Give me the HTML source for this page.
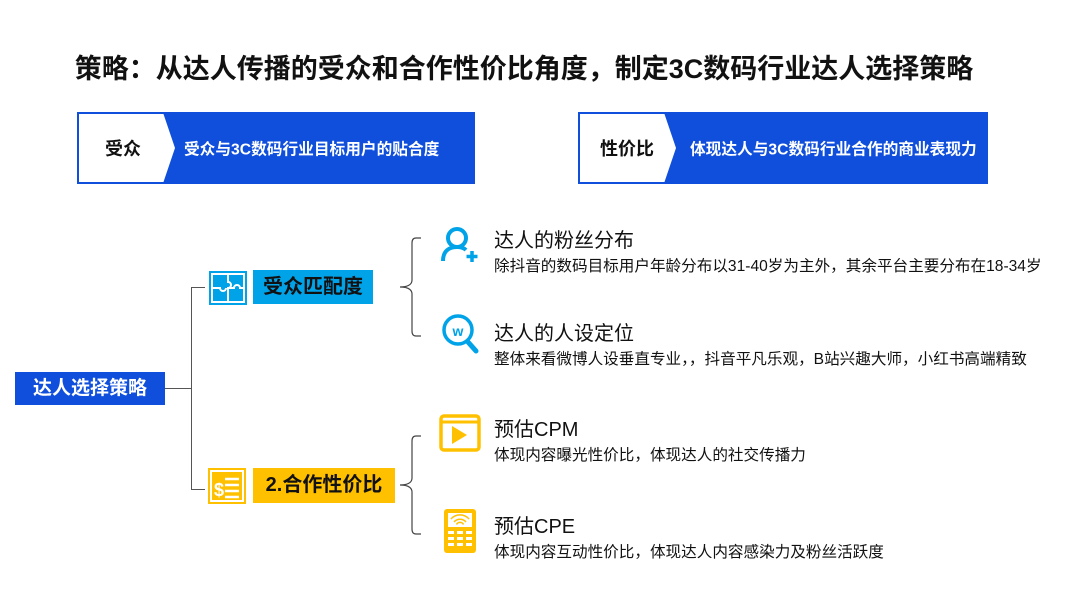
<!DOCTYPE html>
<html><head><meta charset="utf-8"><style>
*{margin:0;padding:0;box-sizing:border-box}
body{width:1080px;height:598px;background:#fff;position:relative;overflow:hidden;font-family:"Liberation Sans","Noto Sans CJK SC",sans-serif;color:#111}
.a{position:absolute;white-space:nowrap}
.title{left:0;width:1048px;text-align:center;top:47px;font-size:27px;font-weight:bold}
.hb{position:absolute;top:112px;height:72px;background:#0f4fdc;border:2px solid #0f4fdc}
.hb .w{position:absolute;left:0;top:0;bottom:0;background:#fff;clip-path:polygon(0 0,88% 0,100% 50%,88% 100%,0 100%)}
.hb .w span{position:absolute;top:50%;transform:translateY(-50%);font-size:18px;font-weight:bold;color:#111}
.hb .t{position:absolute;top:50%;transform:translateY(-50%);color:#fff;font-size:15.7px;font-weight:bold}
.h{font-size:20px;color:#111}
.s{font-size:15.6px;color:#111}
.ln{position:absolute;background:#555}
</style></head><body>
<div class="a title">策略：从达人传播的受众和合作性价比角度，制定3C数码行业达人选择策略</div>

<div class="hb" style="left:77px;width:398px"><div class="w" style="width:96px"><span style="left:26px">受众</span></div><div class="t" style="left:105px">受众与3C数码行业目标用户的贴合度</div></div>
<div class="hb" style="left:578px;width:410px"><div class="w" style="width:96px"><span style="left:20px">性价比</span></div><div class="t" style="left:110px">体现达人与3C数码行业合作的商业表现力</div></div>

<div class="a" style="left:15px;top:372px;width:150px;height:33px;background:#0f4fdc;color:#fff;font-size:19px;font-weight:bold;text-align:center;line-height:33px">达人选择策略</div>

<div class="ln" style="left:165px;top:388px;width:27px;height:1px"></div>
<div class="ln" style="left:191px;top:287px;width:1px;height:203px"></div>
<div class="ln" style="left:191px;top:287px;width:14px;height:1px"></div>
<div class="ln" style="left:191px;top:489px;width:14px;height:1px"></div>

<svg class="a" style="left:208px;top:270px" width="40" height="36" viewBox="0 0 40 36"><rect x="1" y="1" width="38" height="34" fill="#00a2e8"/><rect x="4" y="4" width="32" height="28" fill="none" stroke="#fff" stroke-width="2"/><path d="M20 4v8a3 3 0 0 1 0 6v14M4 18h8a3 3 0 0 0 6 0M20 18h6a3 3 0 0 1 6 0h4" fill="none" stroke="#fff" stroke-width="2"/></svg>
<div class="a" style="left:253px;top:270px;width:120px;height:34px;background:#00a2e8;font-size:20px;font-weight:bold;text-align:center;line-height:34px">受众匹配度</div>

<svg class="a" style="left:208px;top:468px" width="38" height="36" viewBox="0 0 38 36"><rect x="0" y="0" width="38" height="36" fill="#ffc000"/><rect x="3" y="3" width="32" height="30" fill="none" stroke="#fff" stroke-width="2"/><text x="6" y="28" font-size="18" font-weight="bold" fill="#fff" font-family="Liberation Sans">$</text><path d="M17 11h14M17 17h14M17 23h14M17 29h14" stroke="#fff" stroke-width="2.5"/></svg>
<div class="a" style="left:253px;top:468px;width:142px;height:35px;background:#ffc000;font-size:20px;font-weight:bold;text-align:center;line-height:35px">2.合作性价比</div>

<svg class="a" style="left:398px;top:230px" width="24" height="110"><path d="M23 8h-5c-3 0-4 2-4 5v37c0 3-2 7-12 7h-0M2 57c10 0 12 4 12 7v37c0 3 1 5 4 5h5" fill="none" stroke="#444" stroke-width="1.2"/></svg>
<svg class="a" style="left:398px;top:428px" width="24" height="112"><path d="M23 8h-5c-3 0-4 2-4 5v37c0 3-2 7-12 7M2 57c10 0 12 4 12 7v37c0 3 1 5 4 5h5" fill="none" stroke="#444" stroke-width="1.2"/></svg>

<svg class="a" style="left:439px;top:225px" width="42" height="40" viewBox="0 0 42 40"><circle cx="18" cy="13" r="9" fill="none" stroke="#00a2e8" stroke-width="4"/><path d="M4 36c0-10 6-14 14-14c4 0 7 1 9 3" fill="none" stroke="#00a2e8" stroke-width="4"/><path d="M33 26v11M27.5 31.5h11" stroke="#00a2e8" stroke-width="3.5"/></svg>
<div class="a h" style="left:494px;top:224px">达人的粉丝分布</div>
<div class="a s" style="left:494px;top:254px">除抖音的数码目标用户年龄分布以31-40岁为主外，其余平台主要分布在18-34岁</div>

<svg class="a" style="left:440px;top:313px" width="42" height="44" viewBox="0 0 42 44"><circle cx="18" cy="17" r="14" fill="none" stroke="#00a2e8" stroke-width="3.5"/><text x="18" y="23" text-anchor="middle" font-size="14" font-weight="bold" fill="#00a2e8" font-family="Liberation Sans">w</text><path d="M28 29l8 9" stroke="#00a2e8" stroke-width="5" stroke-linecap="round"/></svg>
<div class="a h" style="left:494px;top:317px">达人的人设定位</div>
<div class="a s" style="left:494px;top:347px">整体来看微博人设垂直专业，，抖音平凡乐观，B站兴趣大师，小红书高端精致</div>

<svg class="a" style="left:439px;top:414px" width="42" height="38" viewBox="0 0 42 38"><rect x="2" y="2" width="38" height="34" rx="3" fill="none" stroke="#ffc000" stroke-width="3.5"/><path d="M2 8h38" stroke="#ffc000" stroke-width="3"/><path d="M13 12l15 9-15 9z" fill="#ffc000"/></svg>
<div class="a h" style="left:494px;top:413px">预估CPM</div>
<div class="a s" style="left:494px;top:443px">体现内容曝光性价比，体现达人的社交传播力</div>

<svg class="a" style="left:443px;top:508px" width="34" height="46" viewBox="0 0 34 46"><rect x="1" y="1" width="32" height="44" rx="3" fill="#ffc000"/><rect x="5" y="5" width="24" height="14" fill="#fff"/><path d="M11 14a8 8 0 0 1 12 0M13.5 16.5a4 4 0 0 1 7 0M8 11a12 12 0 0 1 18 0" fill="none" stroke="#ffc000" stroke-width="1.5"/><g fill="#fff"><rect x="5" y="23" width="6" height="3"/><rect x="14" y="23" width="6" height="3"/><rect x="23" y="23" width="6" height="3"/><rect x="5" y="29" width="6" height="3"/><rect x="14" y="29" width="6" height="3"/><rect x="23" y="29" width="6" height="3"/><rect x="5" y="35" width="6" height="3"/><rect x="14" y="35" width="6" height="3"/><rect x="23" y="35" width="6" height="3"/></g></svg>
<div class="a h" style="left:494px;top:510px">预估CPE</div>
<div class="a s" style="left:494px;top:540px">体现内容互动性价比，体现达人内容感染力及粉丝活跃度</div>
</body></html>
